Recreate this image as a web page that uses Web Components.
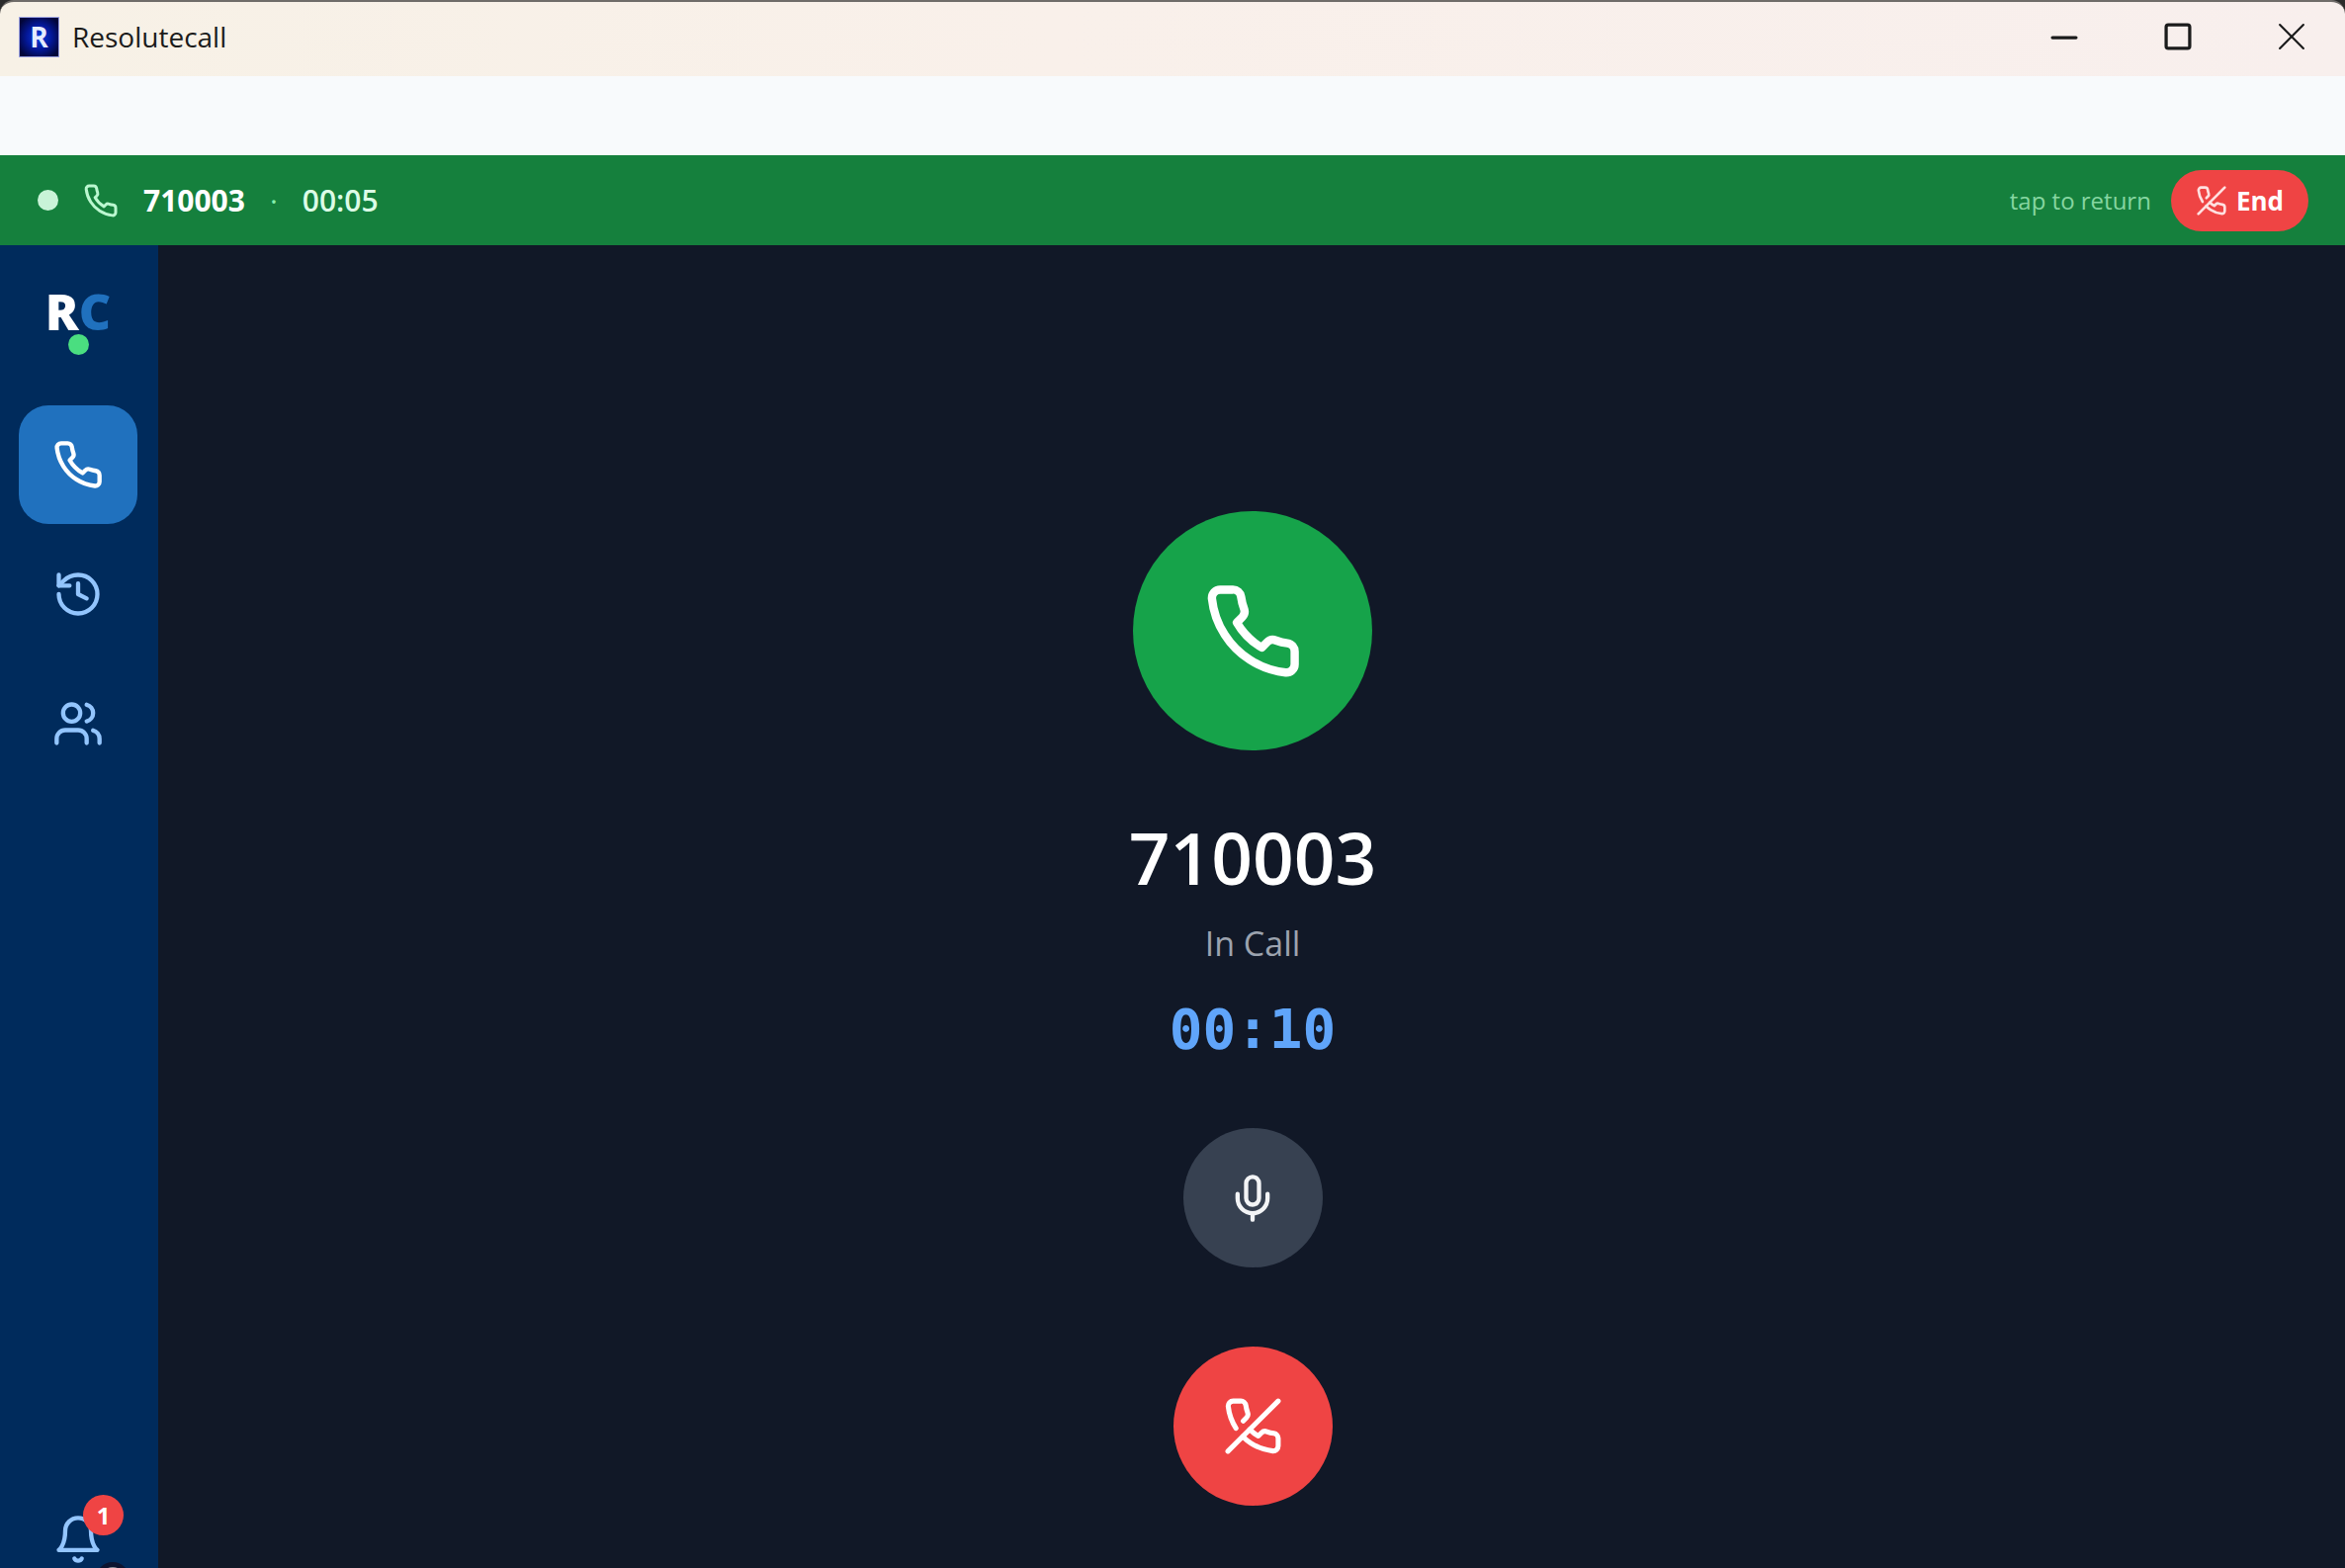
<!DOCTYPE html>
<html lang="en">
<head>
<meta charset="utf-8">
<title>Resolutecall</title>
<style>
html, body { height: 100%; }
body { margin: 0; overflow: hidden; background: #2b2b2b; font-family: "Open Sans", "Noto Sans", sans-serif; }
</style>
</head>
<body>
<rc-window></rc-window>
<script>
const ICONS = {
  phone: '<path d="M22 16.92v3a2 2 0 0 1-2.18 2 19.79 19.79 0 0 1-8.63-3.07 19.5 19.5 0 0 1-6-6 19.79 19.79 0 0 1-3.07-8.67A2 2 0 0 1 4.11 2h3a2 2 0 0 1 2 1.72 12.84 12.84 0 0 0 .7 2.81 2 2 0 0 1-.45 2.11L8.09 9.91a16 16 0 0 0 6 6l1.27-1.27a2 2 0 0 1 2.11-.45 12.84 12.84 0 0 0 2.81.7A2 2 0 0 1 22 16.92z"/>',
  'phone-off': '<path d="M10.68 13.31a16 16 0 0 0 3.41 2.6l1.27-1.27a2 2 0 0 1 2.11-.45 12.84 12.84 0 0 0 2.81.7 2 2 0 0 1 1.72 2v3a2 2 0 0 1-2.18 2 19.79 19.79 0 0 1-8.63-3.07 19.42 19.42 0 0 1-3.33-2.67m-2.67-3.34a19.79 19.79 0 0 1-3.07-8.63A2 2 0 0 1 4.11 2h3a2 2 0 0 1 2 1.72 12.84 12.84 0 0 0 .7 2.81 2 2 0 0 1-.45 2.11L8.09 9.91"/><path d="M22 2 2 22"/>',
  history: '<path d="M3 12a9 9 0 1 0 9-9 9.75 9.75 0 0 0-6.74 2.74L3 8"/><path d="M3 3v5h5"/><path d="M12 7v5l4 2"/>',
  users: '<path d="M16 21v-2a4 4 0 0 0-4-4H6a4 4 0 0 0-4 4v2"/><circle cx="9" cy="7" r="4"/><path d="M22 21v-2a4 4 0 0 0-3-3.87"/><path d="M16 3.13a4 4 0 0 1 0 7.75"/>',
  bell: '<path d="M6 8a6 6 0 0 1 12 0c0 7 3 9 3 9H3s3-2 3-9"/><path d="M10.3 21a1.94 1.94 0 0 0 3.4 0"/>',
  mic: '<path d="M12 2a3 3 0 0 0-3 3v7a3 3 0 0 0 6 0V5a3 3 0 0 0-3-3Z"/><path d="M19 10v2a7 7 0 0 1-14 0v-2"/><path d="M12 19v3"/>',
  minimize: '<path d="M1 13h22"/>',
  maximize: '<rect x="1" y="1" width="22" height="22" rx="2"/>',
  close: '<path d="M1 1l22 22M23 1 1 23"/>'
};

class Base extends HTMLElement {
  connectedCallback() {
    if (this.shadowRoot) return;
    this.attachShadow({ mode: 'open' }).innerHTML =
      '<style>*{box-sizing:border-box}:host{box-sizing:border-box}button{font:inherit;color:inherit;border:0;padding:0;margin:0;background:none;cursor:pointer}</style>' + this.render();
  }
}

class RcIcon extends Base {
  render() {
    const w = this.getAttribute('stroke') || 2;
    return `<style>:host{display:block;flex:none;width:var(--size,52px);height:var(--size,52px)}
      svg{display:block;width:100%;height:100%;overflow:visible}</style>
      <svg viewBox="0 0 24 24" fill="none" stroke="currentColor" stroke-width="${w}" stroke-linecap="round" stroke-linejoin="round" aria-hidden="true">${ICONS[this.getAttribute('name')]}</svg>`;
  }
}

class RcTitlebar extends Base {
  render() {
    return `<style>
      :host{display:flex;align-items:center;height:77px;flex:none;padding-left:19px;gap:13px;color:#1b1b1b;
        background:linear-gradient(90deg,#f7f1e6,#f9f0ea 45%,#f8efed);border-top:2px solid #6f6c69;border-radius:14px 14px 0 0}
      .app,.title{margin-bottom:5px}
      .app{display:grid;place-items:center;width:41px;height:41px;border:1px solid #9aa0e0;
        background:radial-gradient(circle,#0a3fe0 0,#04189a 45%,#02063a 85%);color:#e6ecff;font-size:28px;line-height:28px;font-weight:700}
      .title{font-size:28px;line-height:40px;flex:1}
      nav{display:flex;gap:7px;align-self:stretch}
      button{width:108px;display:grid;place-items:center;padding-bottom:5px}
      rc-icon{--size:26px}
    </style>
    <span class="app">R</span><span class="title"><slot></slot></span>
    <nav>
      <button aria-label="Minimize"><rc-icon name="minimize" stroke="3"></rc-icon></button>
      <button aria-label="Maximize"><rc-icon name="maximize" stroke="3"></rc-icon></button>
      <button aria-label="Close"><rc-icon name="close" stroke="2"></rc-icon></button>
    </nav>`;
  }
}

class RcCallBar extends Base {
  render() {
    return `<style>
      :host{display:flex;align-items:center;height:91px;flex:none;padding:0 37px 0 38px;gap:25px;background:#15803d;color:#fff}
      .live{width:21px;height:21px;border-radius:50%;background:#c9f3d8}
      rc-icon{--size:36px;color:#bbf7d0}
      .info{display:flex;align-items:center;flex:1;gap:25px;font-size:30px;line-height:40px}
      .number{font-weight:700}
      .sep{color:#86efac}
      .time{color:#dcfce7;font-weight:600}
      .hint{font-size:24px;line-height:32px;color:#86d6a1}
      .end{display:flex;align-items:center;gap:9px;height:62px;padding:0 25px;border-radius:31px;background:#ef4444;
        font-size:26px;line-height:36px;font-weight:700}
      .end rc-icon{--size:32px;color:#ffe0e0}
      .right{display:flex;align-items:center;gap:20px}
    </style>
    <span class="live"></span><rc-icon name="phone"></rc-icon>
    <div class="info"><span class="number">710003</span><span class="sep">·</span><span class="time">00:05</span></div>
    <div class="right"><span class="hint">tap to return</span>
    <button class="end"><rc-icon name="phone-off"></rc-icon>End</button></div>`;
  }
}

class RcNavItem extends Base {
  render() {
    return `<style>
      :host{display:block}
      button{position:relative;display:grid;place-items:center;width:120px;height:120px;border-radius:30px;color:#93c5fd}
      :host([active]) button{background:#2071be;color:#fff}
      ::slotted(*){position:absolute}
    </style>
    <button aria-label="${this.getAttribute('label')}"><rc-icon name="${this.getAttribute('icon')}" stroke="2"></rc-icon><slot></slot></button>`;
  }
}

class RcSidebar extends Base {
  render() {
    return `<style>
      :host{display:flex;flex-direction:column;align-items:center;width:160px;flex:none;padding:39px 2px 0 0;background:#002b5c;overflow:hidden}
      .brand{font-size:50px;line-height:56px;font-weight:800;color:#fff}
      .brand b{color:#2071be;font-weight:800}
      .online{width:21px;height:21px;border-radius:50%;background:#4ade80;margin-bottom:51px;margin-top:-5px}
      nav{display:flex;flex-direction:column;gap:11px}
      .foot{margin-top:auto;margin-bottom:-31px}
      .count{top:15px;left:65px;width:41px;height:41px;border-radius:50%;background:#ef4444;color:#fff;
        font-size:24px;line-height:41px;font-weight:700;text-align:center}
      .status{left:78px;top:83px;width:34px;height:34px;border-radius:50%;background:#8b8f98;border:5px solid #0d1430;box-sizing:border-box}
    </style>
    <div class="brand">R<b>C</b></div><span class="online"></span>
    <nav>
      <rc-nav-item icon="phone" label="Calls" active></rc-nav-item>
      <rc-nav-item icon="history" label="History"></rc-nav-item>
      <rc-nav-item icon="users" label="Contacts"></rc-nav-item>
    </nav>
    <rc-nav-item class="foot" icon="bell" label="Notifications"><span class="count">1</span><span class="status"></span></rc-nav-item>`;
  }
}

class RcCallScreen extends Base {
  render() {
    return `<style>
      :host{display:flex;flex-direction:column;align-items:center;flex:1;min-width:0;padding:269px 0 0 2px;background:#111827;color:#fff;overflow:hidden}
      .avatar,button{display:grid;place-items:center;border-radius:50%;flex:none}
      .avatar{width:242px;height:242px;background:#16a34a;--size:101px}
      h1{margin:63px 0 0;font-size:73px;line-height:90px;font-weight:600}
      .state{margin-top:17px;font-size:34px;line-height:50px;color:#9ca3af}
      .timer{margin-top:22px;font:700 56px/80px "DejaVu Sans Mono","Liberation Mono",monospace;color:#60a5fa}
      .mute{width:141px;height:141px;margin-top:60px;background:#374151;color:#f3f4f6}
      .hang{width:161px;height:161px;margin-top:80px;background:#ef4444;color:#fff;--size:61px}
    </style>
    <div class="avatar"><rc-icon name="phone"></rc-icon></div>
    <h1>710003</h1>
    <div class="state">In Call</div>
    <div class="timer">00:10</div>
    <button class="mute" aria-label="Mute"><rc-icon name="mic"></rc-icon></button>
    <button class="hang" aria-label="End call"><rc-icon name="phone-off"></rc-icon></button>`;
  }
}

class RcWindow extends Base {
  render() {
    return `<style>
      :host{display:flex;flex-direction:column;height:100vh}
      .menu{height:80px;flex:none;background:#f8fafc}
      main{display:flex;flex:1;min-height:0}
    </style>
    <rc-titlebar>Resolutecall</rc-titlebar>
    <div class="menu"></div>
    <rc-call-bar></rc-call-bar>
    <main><rc-sidebar></rc-sidebar><rc-call-screen></rc-call-screen></main>`;
  }
}

customElements.define('rc-icon', RcIcon);
customElements.define('rc-titlebar', RcTitlebar);
customElements.define('rc-call-bar', RcCallBar);
customElements.define('rc-nav-item', RcNavItem);
customElements.define('rc-sidebar', RcSidebar);
customElements.define('rc-call-screen', RcCallScreen);
customElements.define('rc-window', RcWindow);
</script>
</body>
</html>
